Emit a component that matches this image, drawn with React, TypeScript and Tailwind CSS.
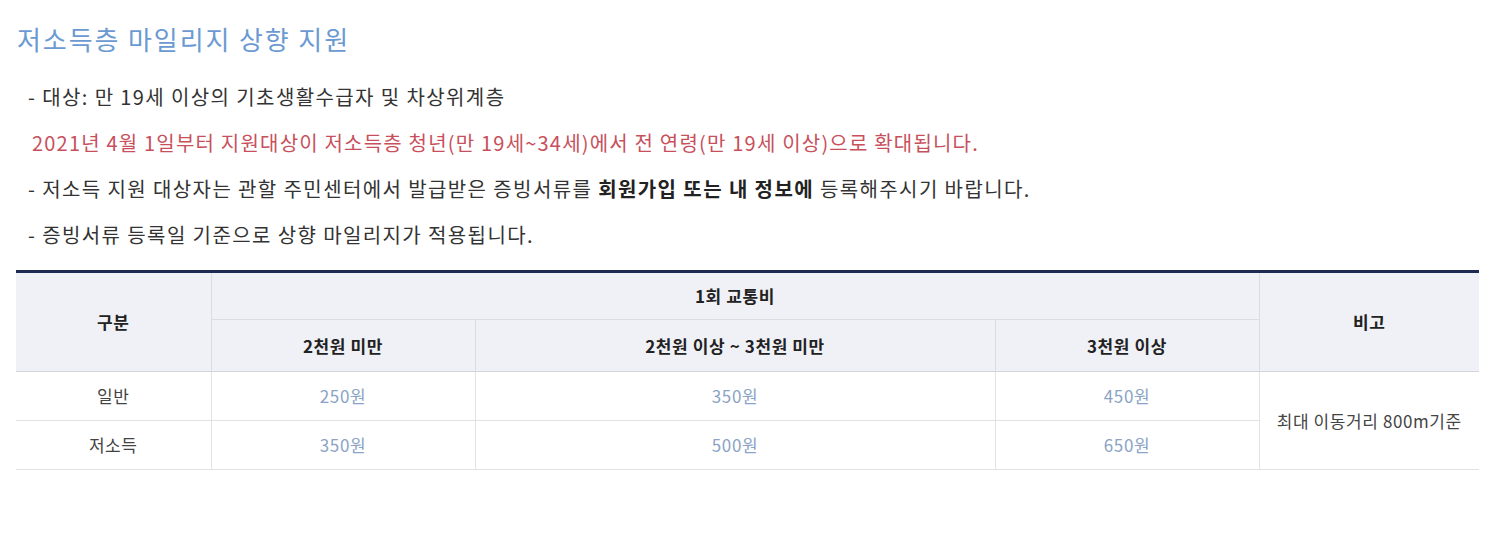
const font = { fontFamily: '"Noto Sans CJK KR", "Noto Sans", sans-serif' };

const rows = [
  { label: "일반", values: ["250원", "350원", "450원"] },
  { label: "저소득", values: ["350원", "500원", "650원"] },
];

export default function App() {
  return (
    <div className="bg-white min-h-[533px] px-4" style={font}>
      <h2 className="pt-[21px] text-[26px] leading-[36px] text-[#6b9ad2] tracking-[1.9px] pl-[1px]">
        저소득층 마일리지 상향 지원
      </h2>
      <ul className="mt-[17px] text-[20px] leading-[46px] text-[#333] tracking-[1.4px]">
        <li className="pl-[12px]">- 대상: 만 19세 이상의 기초생활수급자 및 차상위계층</li>
        <li className="pl-[16px] text-[#c8505c] tracking-[1.2px]">
          2021년 4월 1일부터 지원대상이 저소득층 청년(만 19세~34세)에서 전 연령(만 19세 이상)으로 확대됩니다.
        </li>
        <li className="pl-[12px]">
          - 저소득 지원 대상자는 관할 주민센터에서 발급받은 증빙서류를{" "}
          <b className="font-bold text-[#222]">회원가입 또는 내 정보에</b> 등록해주시기 바랍니다.
        </li>
        <li className="pl-[12px]">- 증빙서류 등록일 기준으로 상향 마일리지가 적용됩니다.</li>
      </ul>
      <table className="mt-[12px] w-[1463px] border-collapse table-fixed border-t-[3px] border-t-[#1e2a52] text-[17px] tracking-[0.6px]">
        <colgroup>
          <col className="w-[195px]" />
          <col className="w-[264px]" />
          <col className="w-[520px]" />
          <col className="w-[264px]" />
          <col className="w-[220px]" />
        </colgroup>
        <thead className="bg-[#eff1f6] text-[#222] font-bold">
          <tr className="h-[48px]">
            <th rowSpan={2} className="border-r border-[#dcdde2] border-b border-b-[#d4d5da]">
              구분
            </th>
            <th colSpan={3} className="border-r border-b border-[#dcdde2]">
              1회 교통비
            </th>
            <th rowSpan={2} className="border-b border-b-[#d4d5da]">
              비고
            </th>
          </tr>
          <tr className="h-[52px]">
            <th className="border-r border-[#dcdde2] border-b border-b-[#d4d5da]">2천원 미만</th>
            <th className="border-r border-[#dcdde2] border-b border-b-[#d4d5da]">2천원 이상 ~ 3천원 미만</th>
            <th className="border-r border-[#dcdde2] border-b border-b-[#d4d5da]">3천원 이상</th>
          </tr>
        </thead>
        <tbody className="text-center">
          {rows.map((r, i) => (
            <tr key={r.label} className="h-[49px]">
              <td className="border-r border-b border-[#e2e2e2] text-[#444]">{r.label}</td>
              {r.values.map((v) => (
                <td key={v} className="border-r border-b border-[#e2e2e2] text-[#8ba3c4]">
                  {v}
                </td>
              ))}
              {i === 0 && (
                <td rowSpan={2} className="border-b border-[#e2e2e2] text-[#444]">
                  최대 이동거리 800m기준
                </td>
              )}
            </tr>
          ))}
        </tbody>
      </table>
    </div>
  );
}
